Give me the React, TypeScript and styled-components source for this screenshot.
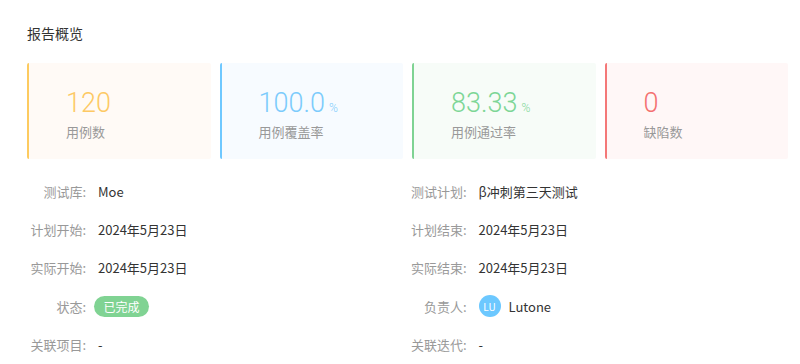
import React from 'react'
import styled, { createGlobalStyle } from 'styled-components'

const GlobalStyle = createGlobalStyle`
  html, body {
    margin: 0;
    padding: 0;
    background: #fff;
  }
  body {
    font-family: "Noto Sans CJK SC", "Noto Sans", sans-serif;
    color: #333;
  }
`

const Page = styled.div`
  width: 761px;
  padding: 22px 0 0 27px;
`

const Title = styled.h3`
  margin: 0;
  height: 22px;
  line-height: 22px;
  font-size: 14px;
  font-weight: 400;
  color: #333;
`

const Cards = styled.ul`
  display: grid;
  grid-template-columns: repeat(4, 1fr);
  gap: 9px;
  margin: 19px 0 0;
  padding: 0;
  list-style: none;
`

const Card = styled.li<{ $accent: string; $bg: string }>`
  height: 96px;
  box-sizing: border-box;
  padding: 24px 0 0 37px;
  border-left: 2px solid ${(p) => p.$accent};
  border-radius: 2px;
  background: ${(p) => p.$bg};
`

const Value = styled.div<{ $color: string }>`
  display: flex;
  align-items: baseline;
  height: 32px;
  font-family: Roboto, "Noto Sans", sans-serif;
  font-weight: 300;
  font-size: 27px;
  line-height: 32px;
  color: ${(p) => p.$color};
`

const Unit = styled.span`
  margin-left: 4px;
  font-size: 12px;
`

const CardLabel = styled.div`
  margin-top: 4px;
  font-size: 13px;
  line-height: 18px;
  color: #999;
`

const Details = styled.div`
  display: grid;
  grid-template-columns: 1fr 1fr;
  margin-top: 13px;
`

const Row = styled.div`
  display: flex;
  align-items: center;
  height: 38.4px;
  font-size: 13px;
`

const Label = styled.span`
  width: 59px;
  flex: none;
  text-align: right;
  color: #999;
  white-space: nowrap;
`

const Text = styled.span`
  margin-left: 12px;
  color: #333;
  display: flex;
  align-items: center;
`

const Tag = styled.span`
  margin-left: 8px;
  display: inline-flex;
  align-items: center;
  justify-content: center;
  width: 55px;
  height: 21px;
  border-radius: 11px;
  background: #80d393;
  color: #fff;
  font-size: 12px;
`

const Avatar = styled.span`
  display: inline-flex;
  align-items: center;
  justify-content: center;
  width: 22px;
  height: 22px;
  margin-right: 8px;
  border-radius: 50%;
  background: #6cc8ff;
  color: #fff;
  font-size: 10px;
`

const stats = [
  { value: '120', label: '用例数', accent: '#fdcb60', bg: '#fffaf6', color: '#fdc964' },
  { value: '100.0', unit: '%', label: '用例覆盖率', accent: '#6fc8ff', bg: '#f7fbff', color: '#7ccbfc' },
  { value: '83.33', unit: '%', label: '用例通过率', accent: '#7fd393', bg: '#f7fcf8', color: '#7dd696' },
  { value: '0', label: '缺陷数', accent: '#f47878', bg: '#fff7f7', color: '#f47070' },
]

export default function App() {
  return (
    <Page>
      <GlobalStyle />
      <Title>报告概览</Title>
      <Cards>
        {stats.map((s) => (
          <Card key={s.label} $accent={s.accent} $bg={s.bg}>
            <Value $color={s.color}>
              {s.value}
              {s.unit && <Unit>{s.unit}</Unit>}
            </Value>
            <CardLabel>{s.label}</CardLabel>
          </Card>
        ))}
      </Cards>
      <Details>
        <Row>
          <Label>测试库:</Label>
          <Text>Moe</Text>
        </Row>
        <Row>
          <Label>测试计划:</Label>
          <Text>β冲刺第三天测试</Text>
        </Row>
        <Row>
          <Label>计划开始:</Label>
          <Text>2024年5月23日</Text>
        </Row>
        <Row>
          <Label>计划结束:</Label>
          <Text>2024年5月23日</Text>
        </Row>
        <Row>
          <Label>实际开始:</Label>
          <Text>2024年5月23日</Text>
        </Row>
        <Row>
          <Label>实际结束:</Label>
          <Text>2024年5月23日</Text>
        </Row>
        <Row>
          <Label>状态:</Label>
          <Tag>已完成</Tag>
        </Row>
        <Row>
          <Label>负责人:</Label>
          <Text>
            <Avatar>LU</Avatar>
            Lutone
          </Text>
        </Row>
        <Row>
          <Label>关联项目:</Label>
          <Text>-</Text>
        </Row>
        <Row>
          <Label>关联迭代:</Label>
          <Text>-</Text>
        </Row>
      </Details>
    </Page>
  )
}
